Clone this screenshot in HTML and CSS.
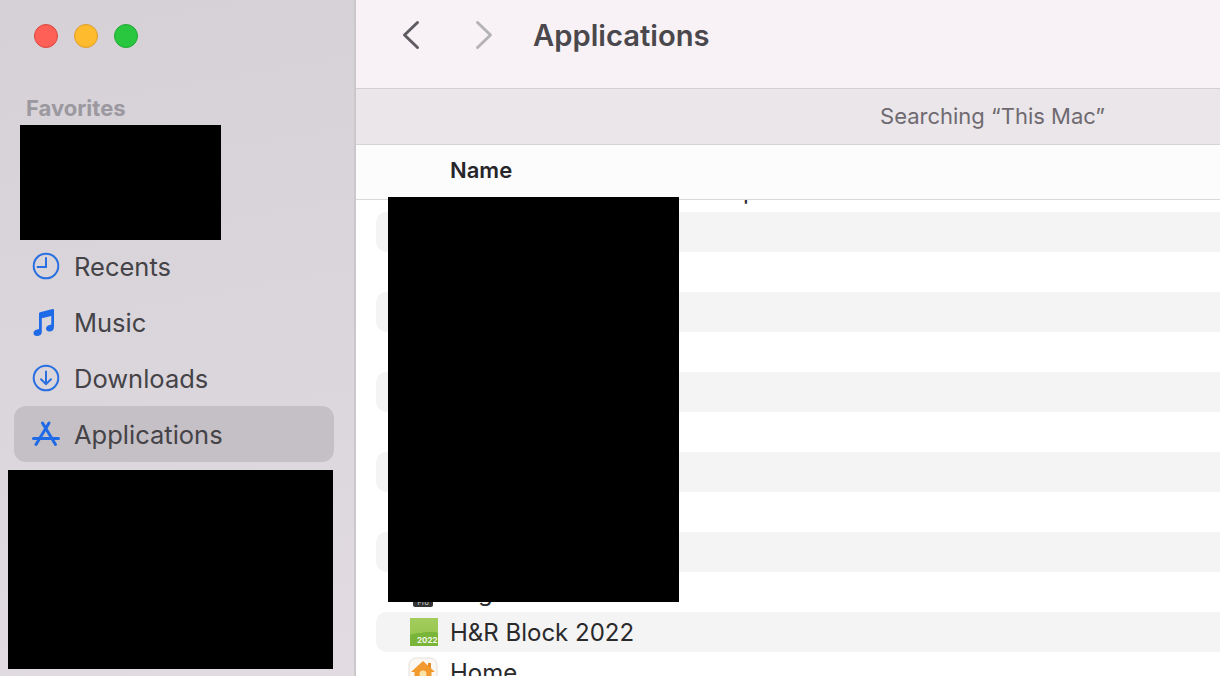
FILE: index.html
```html
<!DOCTYPE html>
<html>
  <head>
    <title>Applications</title>
    <link rel="stylesheet" href="styles.css">
  </head>
  <body>
    <div class="window">
      <div class="sidebar">
        <div class="lights">
          <span class="light red"></span>
          <span class="light yellow"></span>
          <span class="light green"></span>
        </div>
        <div class="section-title">Favorites</div>
        <div class="redacted top-block"></div>
        <div class="side-item">
          <svg class="side-icon" viewBox="0 0 28 28"><circle cx="14" cy="14" r="12.300"/><path d="M14 6V15H5.500"/></svg>
          <span>Recents</span>
        </div>
        <div class="side-item">
          <svg class="side-icon" viewBox="0 0 28 28"><path class="solid" d="M7 5.500Q7 4.500 8 4.200L20.500 1Q22 .8 22 2.200V19C22 22 20 23.500 17.500 23.500 15 23.500 14 22 14 20.500 14 18.500 15.500 17.500 17.500 17L19.300 16.500V8L9.800 10.300V24C9.800 26.500 7.800 28 5 28 2.800 28 1.500 26.800 1.500 25 1.500 23 3 22 5 21.500L7 21Z"/></svg>
          <span>Music</span>
        </div>
        <div class="side-item">
          <svg class="side-icon" viewBox="0 0 28 28"><circle cx="14" cy="14" r="12.300"/><path d="M14 7.500V20M9 15.200 14 20.200 19 15.200"/></svg>
          <span>Downloads</span>
        </div>
        <div class="side-item selected">
          <svg class="side-icon" viewBox="0 0 28 28"><path class="thick" d="M10.500 3 23.500 24.500M17 3 4 24.500M1.500 18.500H26.500"/></svg>
          <span>Applications</span>
        </div>
        <div class="redacted bottom-block"></div>
      </div>
      <div class="main">
        <div class="toolbar">
          <svg class="nav-icon back" viewBox="0 0 20 30"><path d="M17.500 2.500 4.500 15 17.500 27.500"/></svg>
          <svg class="nav-icon forward" viewBox="0 0 20 30"><path d="M4.500 2.500 17.500 15 4.500 27.500"/></svg>
          <h1>Applications</h1>
        </div>
        <div class="search-bar">Searching “This Mac”</div>
        <div class="list-header">Name</div>
        <div class="list">
          <div class="row first"><span class="row-name">Adobe Creative Cloud Desktop</span></div>
          <div class="row"></div>
          <div class="row"></div>
          <div class="row"></div>
          <div class="row"></div>
          <div class="row"></div>
          <div class="row"></div>
          <div class="row"></div>
          <div class="row"></div>
          <div class="row"></div>
          <div class="row">
            <span class="row-icon"><span class="pro-tag">Pro</span></span>
            <span class="row-name">Logic Pro</span>
          </div>
          <div class="row">
            <span class="row-icon hr-icon">2022</span>
            <span class="row-name">H&amp;R Block 2022</span>
          </div>
          <div class="row">
            <svg class="row-icon" viewBox="0 0 30 30">
              <rect x="1" y="1" width="28" height="28" rx="7" fill="#fbf8f4" stroke="#e4dfda"/>
              <path d="M20 6H23V12H20Z" fill="#e58a24"/>
              <path d="M15 4 27 15H23.500V26H6.500V15H3Z" fill="#f29a2e"/>
              <circle cx="15" cy="17" r="3.500" fill="#fde3a8"/>
            </svg>
            <span class="row-name">Home</span>
          </div>
        </div>
        <div class="redacted list-block"></div>
      </div>
    </div>
  </body>
</html>
```

FILE: styles.css
```css
* {
  box-sizing: border-box;
}
html, body {
  height: 100%;
}
body {
  margin: 0;
  overflow: hidden;
  font-family: Inter, "Noto Sans", sans-serif;
}
.window {
  display: flex;
  height: 676px;
}
.redacted {
  background-color: #000;
}

/* sidebar */
.sidebar {
  width: 356px;
  flex-shrink: 0;
  overflow: hidden;
  padding: 24px 20px 0 14px;
  background: linear-gradient(170deg, #d5d1d7 0%, #dad6dc 55%, #e2dce2 100%);
  border-right: 2px solid #cbc8cc;
}
.lights {
  display: flex;
  gap: 16px;
  padding-left: 20px;
}
.light {
  width: 24px;
  height: 24px;
  border-radius: 50%;
}
.red {
  background-color: #fe5f57;
  border: 1px solid #d9483f;
}
.yellow {
  background-color: #febb2e;
  border: 1px solid #dd9c2a;
}
.green {
  background-color: #29c73f;
  border: 1px solid #22a835;
}
.section-title {
  margin: 48px 0 0 12px;
  height: 29px;
  font-size: 22px;
  line-height: 24px;
  font-weight: 700;
  color: #9c989f;
}
.top-block {
  width: 201px;
  height: 115px;
  margin-left: 6px;
}
.side-item {
  display: flex;
  align-items: center;
  gap: 14px;
  height: 56px;
  padding-left: 18px;
  border-radius: 12px;
  font-size: 25.500px;
  color: #454347;
}
.top-block + .side-item {
  margin-top: -2px;
}
.side-item.selected {
  background-color: #c4c0c6;
}
.side-icon {
  width: 28px;
  height: 28px;
  flex-shrink: 0;
  fill: none;
  stroke: #2a6fe0;
  stroke-width: 2;
  stroke-linecap: round;
}
.side-icon .solid {
  fill: #1f6ae6;
  stroke: none;
}
.side-icon .thick {
  stroke: #1f6ae6;
  stroke-width: 3;
}
.bottom-block {
  width: 325px;
  height: 199px;
  margin: 8px 0 0 -6px;
}

/* main area */
.main {
  position: relative;
  flex: 1;
  display: flex;
  flex-direction: column;
  overflow: hidden;
  background-color: #fff;
}
.toolbar {
  display: flex;
  align-items: center;
  height: 89px;
  padding: 0 0 18px 44px;
  background-color: #f8f2f6;
  border-bottom: 1px solid #d3d0d3;
  box-shadow: 0 1px 2px rgba(0, 0, 0, 0.08);
}
.toolbar h1 {
  margin: 0 0 0 40px;
  font-size: 29.200px;
  font-weight: 600;
  color: #4a484c;
}
.nav-icon {
  width: 20px;
  height: 30px;
  fill: none;
  stroke-width: 3;
  stroke-linecap: round;
  stroke-linejoin: round;
}
.back {
  stroke: #5f5c61;
  margin-right: 53px;
}
.forward {
  stroke: #b6b3b7;
}
.search-bar {
  height: 56px;
  padding: 14px 115px 0 0;
  text-align: right;
  font-size: 22px;
  color: #6e6a70;
  background-color: #ebe6ea;
  border-bottom: 1px solid #d6d4d6;
}
.list-header {
  position: relative;
  height: 55px;
  flex-shrink: 0;
  padding: 12px 0 0 94px;
  font-size: 22px;
  font-weight: 600;
  color: #26252a;
  background-color: #fcfcfc;
  border-bottom: 1px solid #d9d9d9;
}
.list {
  flex: 1;
  overflow: hidden;
  padding-left: 20px;
}
.row {
  display: flex;
  align-items: center;
  gap: 12px;
  height: 40px;
  padding-left: 32px;
  border-radius: 10px 0 0 10px;
}
.row.first {
  margin-top: -28px;
}
.row:nth-child(even) {
  background-color: #f4f4f4;
}
.row-icon {
  width: 30px;
  height: 30px;
  flex-shrink: 0;
  display: block;
}
.row-name {
  font-size: 24px;
  color: #2a292c;
  white-space: nowrap;
}
.row.first .row-name {
  padding-bottom: 4px;
}
.hr-icon {
  width: 28px;
  height: 28px;
  margin: 0 0 0 2px;
  padding: 17px 0 0 7px;
  font-size: 8px;
  font-weight: 700;
  line-height: 11px;
  color: #f1f7e4;
  background:
    radial-gradient(ellipse 34px 14px at 70% 100%, #79b539 97%, transparent),
    linear-gradient(#a4cd5e, #8fc24a);
}
.pro-tag {
  display: block;
  width: 20px;
  margin: 21px 0 0 5px;
  font-size: 7px;
  line-height: 9px;
  text-align: center;
  color: #ddd;
  background-color: #333;
  border-radius: 2px;
}
.list-block {
  position: absolute;
  left: 32px;
  top: 197px;
  width: 291px;
  height: 405px;
}
```
